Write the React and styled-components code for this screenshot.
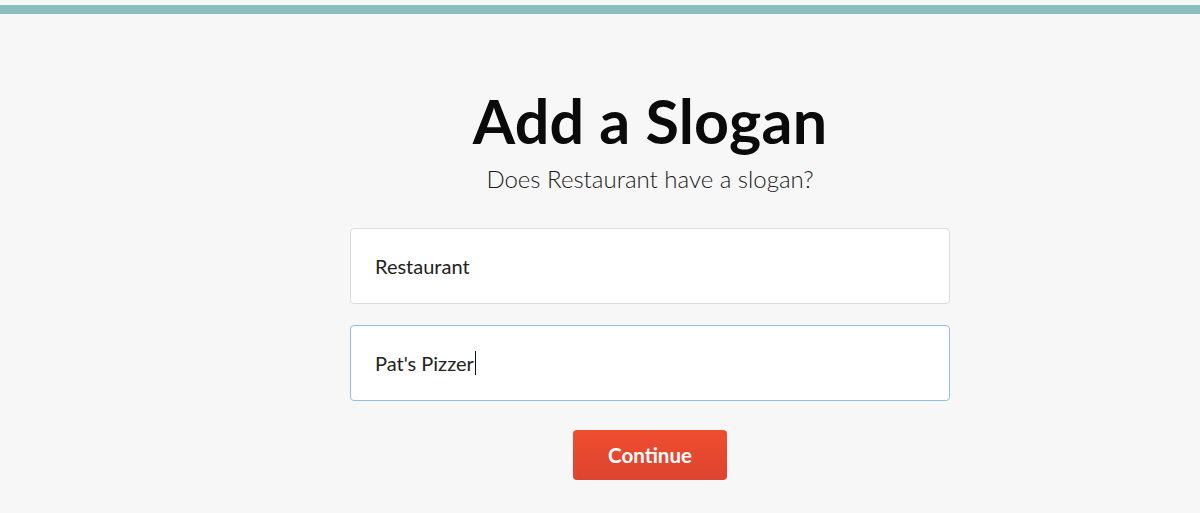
import React from 'react';
import styled, { createGlobalStyle } from 'styled-components';

const GlobalStyle = createGlobalStyle`
  html, body { margin:0; padding:0; background:#f7f7f7; }
  body { font-family: Lato, "Noto Sans", sans-serif; color:#111; }
`;

const Page = styled.div`
  min-height:513px; padding-top:5px; box-sizing:border-box;
`;
const TopBar = styled.div`
  height:9px; background-color:#8bbfbf;
`;
const Content = styled.div`
  display:flex; flex-direction:column; align-items:center;
  padding:70px 0 0 100px;
`;
const Title = styled.h1`
  margin:0; font-size:61px; font-weight:700; line-height:74px; color:#0a0a0a; letter-spacing:0.2px;
`;
const Subtitle = styled.p`
  margin:6px 0 0 0; font-size:24px; font-weight:300; line-height:30px; color:#1a1a1a;
`;
const Form = styled.div`
  display:flex; flex-direction:column; gap:21px; width:600px; margin-top:34px;
`;
const Field = styled.div`
  display:flex; align-items:center; height:76px; box-sizing:border-box;
  padding:0 24px; background:#fff; border-radius:4px;
  border:1px solid ${p => (p.$focused ? '#8fc0e2' : '#dcdcdc')};
  font-size:20px; color:#222;
`;
const Caret = styled.span`
  display:inline-block; width:1px; height:24px; background:#111; margin-left:1px;
`;
const Button = styled.button`
  margin-top:29px; width:154px; height:50px; border:none; border-radius:4px;
  background:linear-gradient(#ef4d2f, #dd4430); color:#fff;
  font-family: Lato, "Noto Sans", sans-serif; font-size:20.5px; font-weight:700;
  cursor:pointer;
`;

export default function App() {
  return (
    <Page>
      <GlobalStyle />
      <TopBar />
      <Content>
        <Title>Add a Slogan</Title>
        <Subtitle>Does Restaurant have a slogan?</Subtitle>
        <Form>
          <Field>Restaurant</Field>
          <Field $focused>Pat's Pizzer<Caret /></Field>
        </Form>
        <Button>Continue</Button>
      </Content>
    </Page>
  );
}
